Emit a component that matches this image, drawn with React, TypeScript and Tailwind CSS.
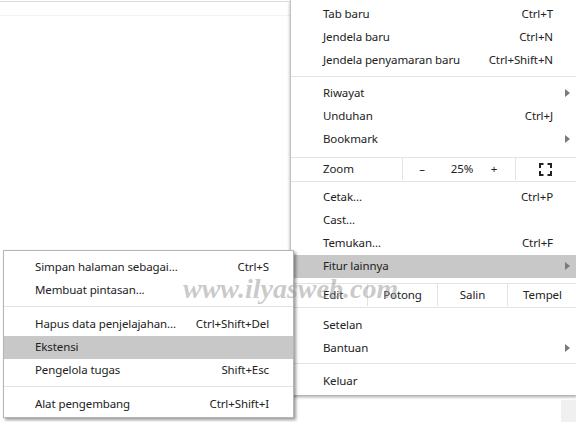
import React from "react";

const font = { fontFamily: '"Noto Sans", "Open Sans", sans-serif' };

function Arrow() {
  return (
    <svg width="5" height="8" viewBox="0 0 5 8" className="block">
      <path d="M0 0 L5 4 L0 8 Z" fill="#7a7a7a" />
    </svg>
  );
}

function Row({
  label,
  shortcut,
  arrow,
  active,
  pl,
}: {
  label: string;
  shortcut?: string;
  arrow?: boolean;
  active?: boolean;
  pl: string;
}) {
  return (
    <div className={`flex h-[23px] items-center pb-px ${pl} ${active ? "bg-[#c8c8c8]" : ""}`}>
      <span className="flex-1 whitespace-nowrap">{label}</span>
      {shortcut && <span className="whitespace-nowrap">{shortcut}</span>}
      <span className="flex w-[24px] shrink-0 items-center pl-[12px]">{arrow && <Arrow />}</span>
    </div>
  );
}

function Sep({ mt, mb }: { mt: string; mb: string }) {
  return <div className={`h-px bg-[#e3e3e3] ${mt} ${mb}`} />;
}

function FullscreenIcon() {
  return (
    <svg width="13" height="13" viewBox="0 0 13 13" className="block">
      <path
        d="M1 5 V1 H4.5 M8.5 1 H12 V5 M12 8 V12 H8.5 M4.5 12 H1 V8"
        stroke="#222"
        strokeWidth="2"
        fill="none"
      />
    </svg>
  );
}

export default function App() {
  return (
    <div
      className="relative h-[422px] w-[576px] overflow-hidden bg-white text-[11.5px] tracking-[-0.1px] text-[#222]"
      style={font}
    >
      <div className="flex items-start">
        {/* page area */}
        <div className="h-[422px] w-[290px] shrink-0">
          <div className="h-px bg-[#dcdcdc] mt-[1px]" />
          <div className="h-px bg-[#f2f2f2] mt-[13px]" />
        </div>
        {/* main menu */}
        <div className="flex h-[422px] flex-1 flex-col">
          <div className="h-[395px] border-l border-[#c4c4c4] bg-white pt-[3px] shadow-[0_2px_3px_rgba(0,0,0,0.35)]">
            <Row pl="pl-[32px]" label="Tab baru" shortcut="Ctrl+T" />
            <Row pl="pl-[32px]" label="Jendela baru" shortcut="Ctrl+N" />
            <Row pl="pl-[32px]" label="Jendela penyamaran baru" shortcut="Ctrl+Shift+N" />
            <Sep mt="mt-[4px]" mb="mb-[5px]" />
            <Row pl="pl-[32px]" label="Riwayat" arrow />
            <Row pl="pl-[32px]" label="Unduhan" shortcut="Ctrl+J" />
            <Row pl="pl-[32px]" label="Bookmark" arrow />
            <div className="mt-[6px] flex h-[25px] border-y border-[#e3e3e3] pb-px">
              <div className="flex w-[111px] items-center pl-[32px]">Zoom</div>
              <div className="flex w-[113px] items-center border-l border-[#e3e3e3]">
                <span className="flex w-[38px] justify-center">–</span>
                <span className="flex w-[42px] justify-center">25%</span>
                <span className="flex w-[22px] justify-center">+</span>
              </div>
              <div className="flex flex-1 items-center border-l border-[#e3e3e3] pl-[23px]">
                <FullscreenIcon />
              </div>
            </div>
            <div className="mt-[4px]" />
            <Row pl="pl-[32px]" label="Cetak..." shortcut="Ctrl+P" />
            <Row pl="pl-[32px]" label="Cast..." />
            <Row pl="pl-[32px]" label="Temukan..." shortcut="Ctrl+F" />
            <Row pl="pl-[32px]" label="Fitur lainnya" arrow active />
            <div className="mt-[5px] flex h-[25px] border-y border-[#e3e3e3] pb-px">
              <div className="flex w-[76px] items-center pl-[32px]">Edit</div>
              <div className="flex w-[70px] items-center justify-center border-l border-[#e3e3e3]">Potong</div>
              <div className="flex w-[70px] items-center justify-center border-l border-[#e3e3e3]">Salin</div>
              <div className="flex w-[70px] shrink-0 items-center justify-center border-l border-[#e3e3e3]">Tempel</div>
            </div>
            <div className="mt-[6px]" />
            <Row pl="pl-[32px]" label="Setelan" />
            <Row pl="pl-[32px]" label="Bantuan" arrow />
            <Sep mt="mt-[3px]" mb="mb-[6px]" />
            <Row pl="pl-[32px]" label="Keluar" />
          </div>
          <div className="flex flex-1 justify-end pt-[5px]">
            <div className="w-[16px] bg-[#f0f0f0]" />
          </div>
        </div>
      </div>

      {/* submenu */}
      <div className="absolute left-[3px] top-[250px] w-[291px] border border-[#b5b5b5] bg-white pt-[5px] pb-[1px] shadow-[2px_2px_3px_rgba(0,0,0,0.4)]">
        <Row pl="pl-[31px]" label="Simpan halaman sebagai..." shortcut="Ctrl+S" />
        <Row pl="pl-[31px]" label="Membuat pintasan..." />
        <Sep mt="mt-[4px]" mb="mb-[6px]" />
        <Row pl="pl-[31px]" label="Hapus data penjelajahan..." shortcut="Ctrl+Shift+Del" />
        <Row pl="pl-[31px]" label="Ekstensi" active />
        <Row pl="pl-[31px]" label="Pengelola tugas" shortcut="Shift+Esc" />
        <Sep mt="mt-[4px]" mb="mb-[6px]" />
        <Row pl="pl-[31px]" label="Alat pengembang" shortcut="Ctrl+Shift+I" />
      </div>

      {/* watermark */}
      <div
        className="pointer-events-none absolute left-[183px] top-[268px] whitespace-nowrap text-[28px] font-bold italic tracking-normal text-[rgba(150,150,150,0.5)]"
        style={{ fontFamily: '"Liberation Serif", serif' }}
      >
        www.ilyasweb.com
      </div>
    </div>
  );
}
